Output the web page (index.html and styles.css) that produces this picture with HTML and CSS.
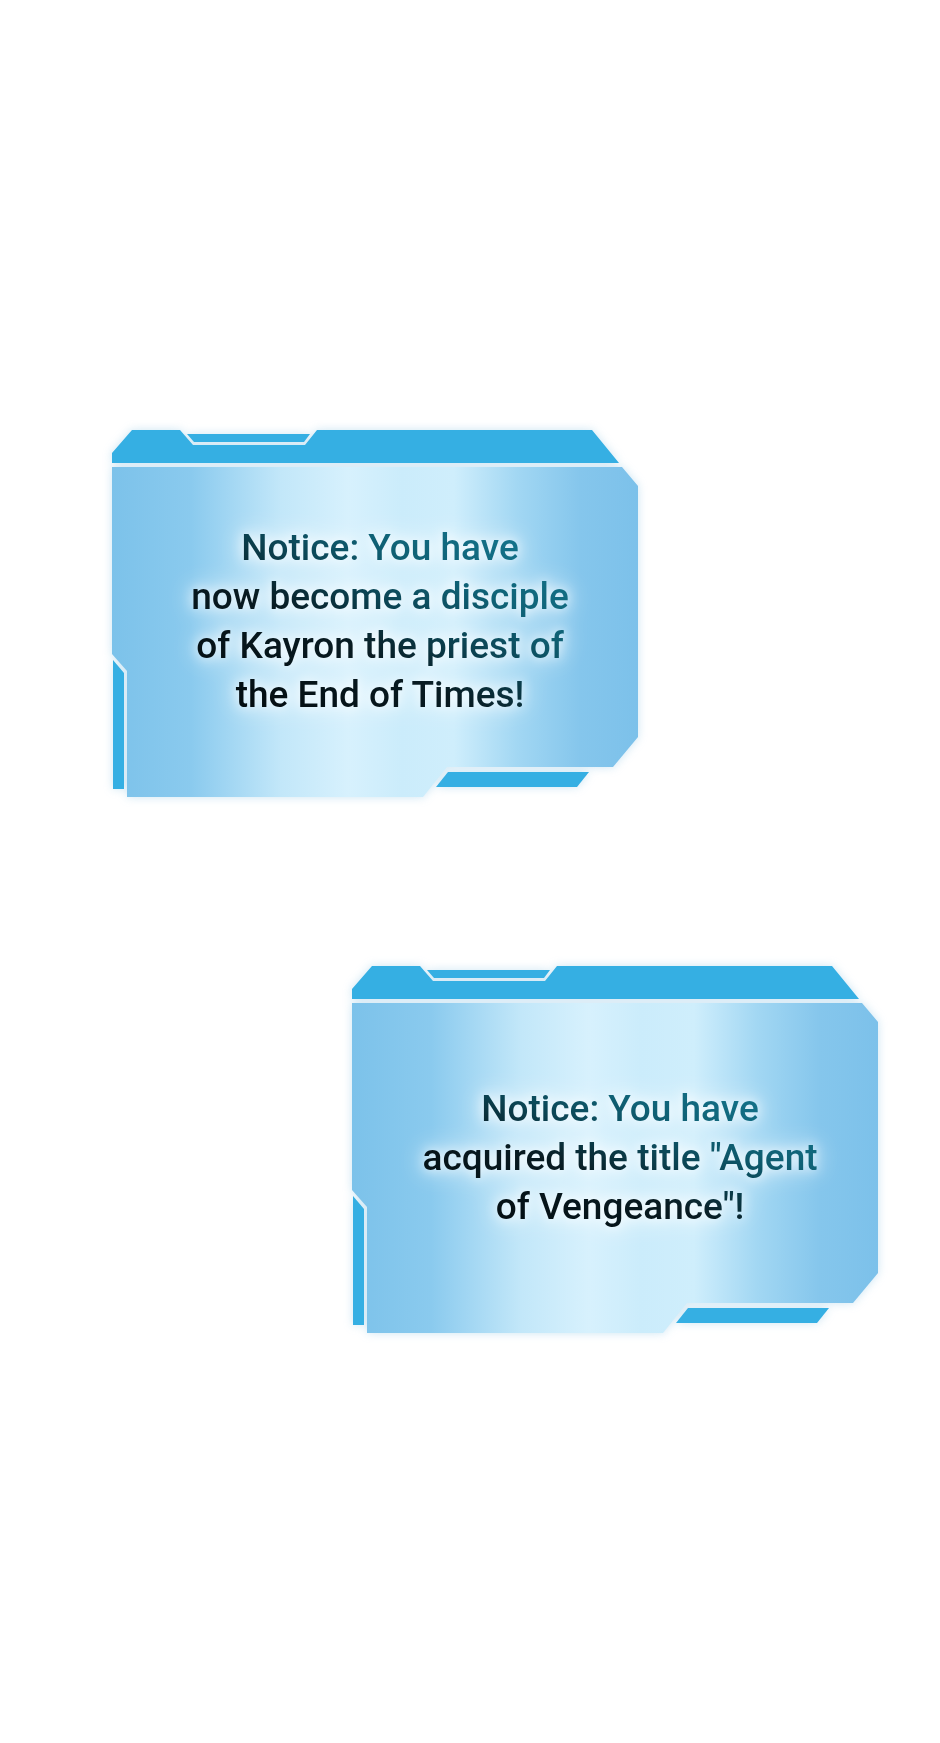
FILE: index.html
```html
<!DOCTYPE html>
<html lang="en">
  <head>
    <meta charset="UTF-8" />
    <meta name="viewport" content="width=device-width, initial-scale=1.0" />
    <title>System Notices</title>
    <link rel="stylesheet" href="styles.css">
  </head>
  <body>
    <main class="page">
      <!-- Notice 1: disciple -->
      <section class="notice notice-left">
        <svg class="notice-frame" viewBox="0 0 540 372" aria-hidden="true">
          <defs>
            <linearGradient id="panelFillA" x1="0" y1="0" x2="1" y2="0">
              <stop offset="0" stop-color="#7cc2ea" />
              <stop offset="0.15" stop-color="#8acaee" />
              <stop offset="0.32" stop-color="#c2e7f9" />
              <stop offset="0.45" stop-color="#d7f1fd" />
              <stop offset="0.55" stop-color="#cbecfb" />
              <stop offset="0.65" stop-color="#cfeefc" />
              <stop offset="0.77" stop-color="#a2d7f3" />
              <stop offset="0.89" stop-color="#85c6ec" />
              <stop offset="1" stop-color="#7cc1ea" />
            </linearGradient>
          </defs>
          <path class="frame-bar" d="M2 25 L22 2 H70 L83 17 H195 L207 2 H482 L509 35 H2 Z" />
          <path class="frame-bar" d="M77 6 H200 L194 14 H84 Z" />
          <path fill="url(#panelFillA)" d="M2 39 H512 L528 58 V309 L503 339 H337 L313 369 H17 V243 L2 226 Z" />
          <path class="frame-bar" d="M3 232 L14 245 V361 H3 Z" />
          <path class="frame-bar" d="M338 344 H479 L467 359 H326 Z" />
        </svg>
        <p class="notice-text">Notice: You have<br>now become a disciple<br>of Kayron the priest of<br>the End of Times!</p>
      </section>

      <!-- Notice 2: title -->
      <section class="notice notice-right">
        <svg class="notice-frame" viewBox="0 0 540 372" aria-hidden="true">
          <defs>
            <linearGradient id="panelFillB" x1="0" y1="0" x2="1" y2="0">
              <stop offset="0" stop-color="#7cc2ea" />
              <stop offset="0.15" stop-color="#8acaee" />
              <stop offset="0.32" stop-color="#c2e7f9" />
              <stop offset="0.45" stop-color="#d7f1fd" />
              <stop offset="0.55" stop-color="#cbecfb" />
              <stop offset="0.65" stop-color="#cfeefc" />
              <stop offset="0.77" stop-color="#a2d7f3" />
              <stop offset="0.89" stop-color="#85c6ec" />
              <stop offset="1" stop-color="#7cc1ea" />
            </linearGradient>
          </defs>
          <path class="frame-bar" d="M2 25 L22 2 H70 L83 17 H195 L207 2 H482 L509 35 H2 Z" />
          <path class="frame-bar" d="M77 6 H200 L194 14 H84 Z" />
          <path fill="url(#panelFillB)" d="M2 39 H512 L528 58 V309 L503 339 H337 L313 369 H17 V243 L2 226 Z" />
          <path class="frame-bar" d="M3 232 L14 245 V361 H3 Z" />
          <path class="frame-bar" d="M338 344 H479 L467 359 H326 Z" />
        </svg>
        <p class="notice-text">Notice: You have<br>acquired the title "Agent<br>of Vengeance"!</p>
      </section>
    </main>
  </body>
</html>
```

FILE: styles.css
```css
/* ====================== RESET ====================== */
* {
  margin: 0;
  padding: 0;
  box-sizing: border-box;
}

body {
  background: #ffffff;
  font-family: Roboto, "Liberation Sans", sans-serif;
}

.page {
  display: flex;
  flex-direction: column;
  padding-top: 428px;
  min-height: 1743px;
}

/* ====================== NOTICE CARD ====================== */
.notice {
  position: relative;
  width: 540px;
  height: 372px;
  padding-top: 14px;
  display: flex;
  align-items: center;
  justify-content: center;
}
.notice-left {
  margin-left: 110px;
}
.notice-right {
  margin-left: 350px;
  margin-top: 164px;
}

/* frame sits behind the text */
.notice-frame {
  position: absolute;
  inset: 0;
  width: 100%;
  height: 100%;
  filter: drop-shadow(0 0 5px rgba(110, 180, 220, 0.35));
}
.frame-bar {
  fill: #35afe3;
}

/* text: dark at bottom-left, teal at top-right, soft white glow */
.notice-text {
  position: relative;
  width: max-content;
  font-size: 37px;
  font-weight: 500;
  line-height: 49px;
  text-align: center;
  background: linear-gradient(to top right, #02080b 0%, #081b22 40%, #0b4352 55%, #0f6175 70%, #167e98 100%);
  -webkit-background-clip: text;
  background-clip: text;
  -webkit-text-fill-color: transparent;
  color: transparent;
  filter: drop-shadow(0 0 6px rgba(255, 255, 255, 0.95)) drop-shadow(0 0 12px rgba(255, 255, 255, 0.75));
}
```
